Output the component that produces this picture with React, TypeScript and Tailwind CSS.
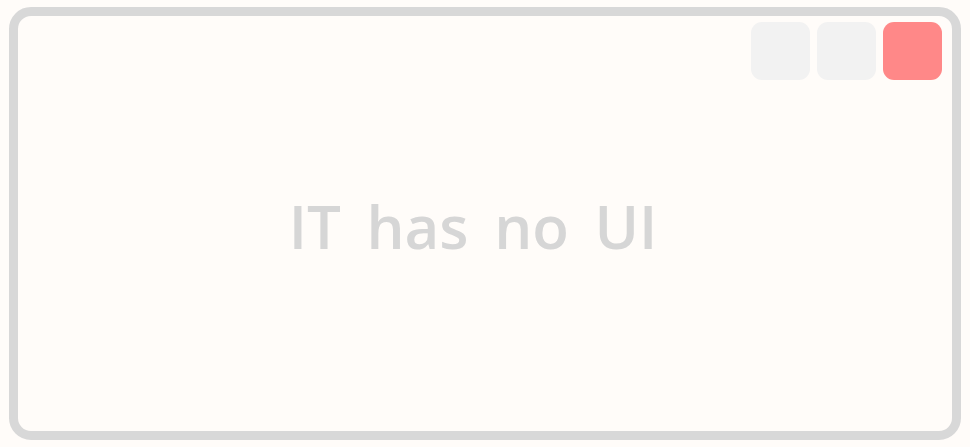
import React from 'react';

const App: React.FC = () => {
  return (
    <div className="h-[447px] w-[970px] bg-[#fffcf9] pt-[7px] pb-[7px] px-[9px]">
      <div className="flex h-full flex-col rounded-[22px] border-[9px] border-[#d8d8d8] bg-[#fffcf9]">
        <div className="flex justify-end gap-[7px] pt-[6px] pr-[10px]">
          <button className="h-[58px] w-[59px] rounded-[11px] bg-[#f2f2f2]" />
          <button className="h-[58px] w-[59px] rounded-[11px] bg-[#f2f2f2]" />
          <button className="h-[58px] w-[59px] rounded-[11px] bg-[#ff8888]" />
        </div>
        <div className="flex flex-1 items-start justify-center pt-[116px] pr-[24px]">
          <h1
            className="text-[60px] font-semibold leading-none text-[#d6d6d6] [word-spacing:10px]"
            style={{ fontFamily: '"Comic Sans MS", "Open Sans", sans-serif' }}
          >
            IT has no UI
          </h1>
        </div>
      </div>
    </div>
  );
};

export default App;
